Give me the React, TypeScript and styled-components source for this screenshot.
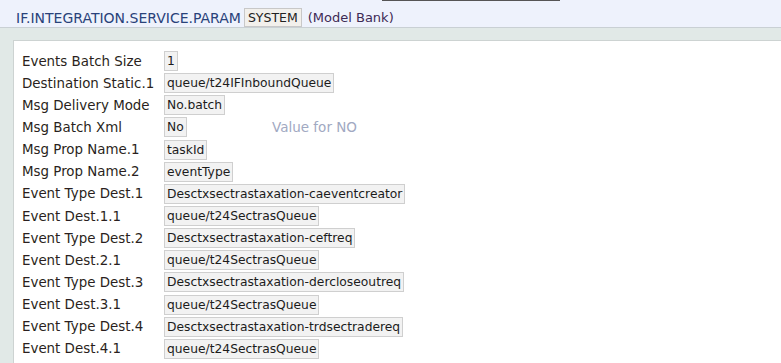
import React from 'react';
import styled, { createGlobalStyle } from 'styled-components';

const GlobalStyle = createGlobalStyle`
  html, body {
    margin: 0;
    padding: 0;
    background: #e1e9e7;
    font-family: Tahoma, "DejaVu Sans", "Noto Sans", sans-serif;
  }
`;

const Page = styled.div`
  width: 781px;
  height: 363px;
  overflow: hidden;
  display: flex;
  flex-direction: column;
  background: #e1e9e7;
`;

const Header = styled.div`
  background: #eef2fc;
  border-bottom: 1px solid #c9d0d4;
  height: 27px;
  display: flex;
  flex-direction: column;
`;

const CutInput = styled.div`
  margin-left: 382px;
  width: 178px;
  height: 1px;
  background: #555;
`;

const TitleRow = styled.div`
  display: flex;
  align-items: center;
  padding: 7px 0 0 16px;
  gap: 3px;
`;

const AppName = styled.span`
  font-size: 14px;
  color: #29427a;
`;

const Company = styled.span`
  font-size: 12.5px;
  line-height: 17px;
  padding: 0 3px;
  color: #222;
  background: #f2f0ec;
  border: 1px solid #c8c8c8;
`;

const Bank = styled.span`
  margin-left: 3px;
  font-size: 13px;
  color: #3d2a55;
`;

const Body = styled.div`
  flex: 1;
  padding: 12px 0 0 13px;
`;

const Panel = styled.div`
  height: 100%;
  background: #fff;
  border-top: 1px solid #cdd3d2;
  border-left: 1px solid #cdd3d2;
  padding: 9px 0 0 8px;
`;

const Row = styled.div`
  display: grid;
  grid-template-columns: 142px minmax(108px, max-content) auto;
  align-items: center;
  height: 22.15px;
`;

const Label = styled.div`
  font-size: 13.4px;
  color: #2a1f20;
  white-space: nowrap;
`;

const ValueCell = styled.div`
  display: flex;
`;

const Value = styled.span`
  font-size: 12.3px;
  color: #1c1c1c;
  background: #f2f2f2;
  border: 1px solid #cfcfcf;
  padding: 0 2px;
  line-height: 18px;
  white-space: nowrap;
`;

const Hint = styled.span`
  font-size: 13.5px;
  color: #a1a9c2;
`;

const rows: Array<[string, string, string?]> = [
  ['Events Batch Size', '1'],
  ['Destination Static.1', 'queue/t24IFInboundQueue'],
  ['Msg Delivery Mode', 'No.batch'],
  ['Msg Batch Xml', 'No', 'Value for NO'],
  ['Msg Prop Name.1', 'taskId'],
  ['Msg Prop Name.2', 'eventType'],
  ['Event Type Dest.1', 'Desctxsectrastaxation-caeventcreator'],
  ['Event Dest.1.1', 'queue/t24SectrasQueue'],
  ['Event Type Dest.2', 'Desctxsectrastaxation-ceftreq'],
  ['Event Dest.2.1', 'queue/t24SectrasQueue'],
  ['Event Type Dest.3', 'Desctxsectrastaxation-dercloseoutreq'],
  ['Event Dest.3.1', 'queue/t24SectrasQueue'],
  ['Event Type Dest.4', 'Desctxsectrastaxation-trdsectradereq'],
  ['Event Dest.4.1', 'queue/t24SectrasQueue'],
  ['', ''],
];

export default function App() {
  return (
    <Page>
      <GlobalStyle />
      <Header>
        <CutInput />
        <TitleRow>
          <AppName>IF.INTEGRATION.SERVICE.PARAM</AppName>
          <Company>SYSTEM</Company>
          <Bank>(Model Bank)</Bank>
        </TitleRow>
      </Header>
      <Body>
        <Panel>
          {rows.map(([label, value, hint], i) => (
            <Row key={i}>
              <Label>{label}</Label>
              <ValueCell>{value ? <Value>{value}</Value> : null}</ValueCell>
              {hint ? <Hint>{hint}</Hint> : null}
            </Row>
          ))}
        </Panel>
      </Body>
    </Page>
  );
}
